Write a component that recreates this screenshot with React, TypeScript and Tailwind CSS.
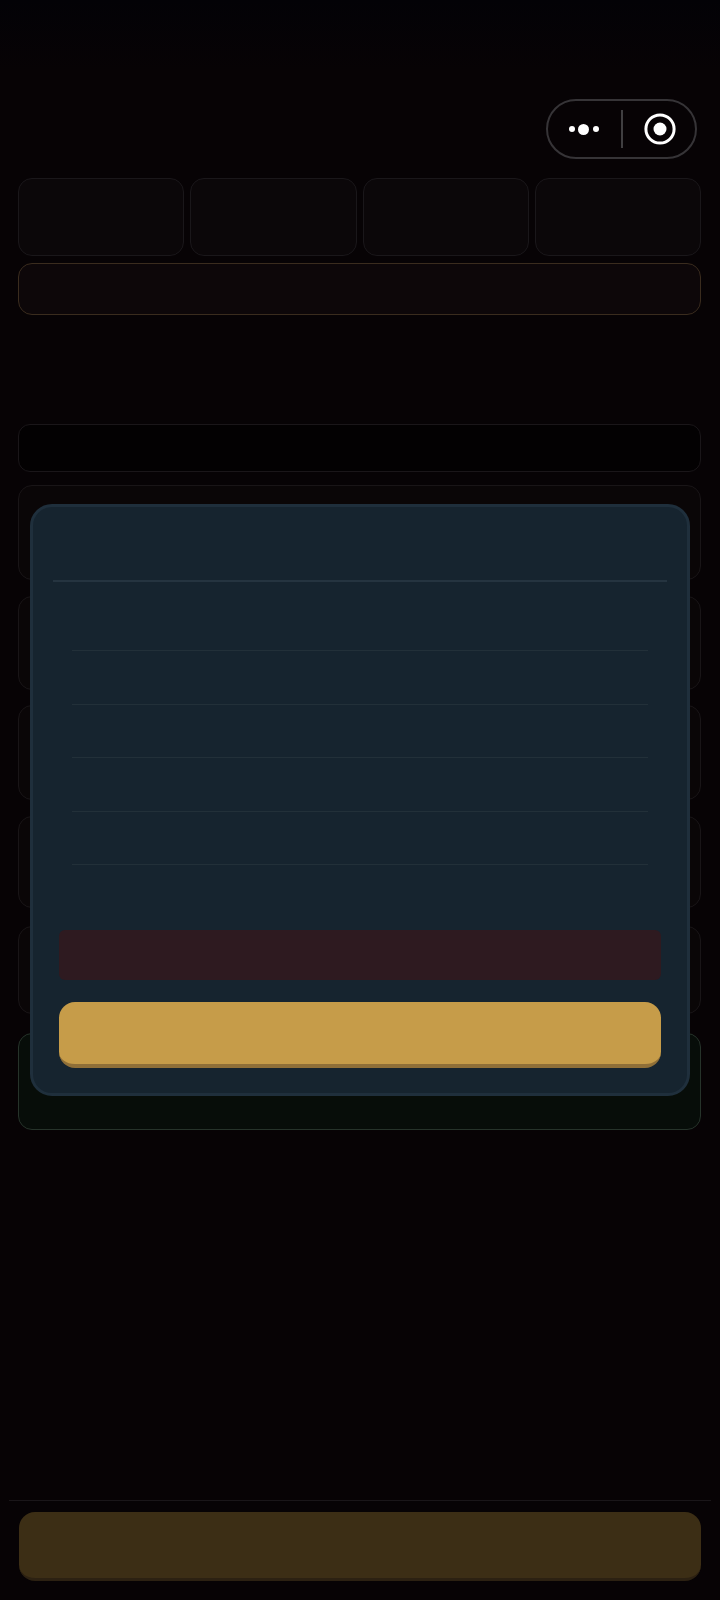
const STATS = ["a", "b", "c", "d"]
const LIST_CARDS = [
  "h-[95px]",
  "mt-[16px] h-[94px]",
  "mt-[15px] h-[95px]",
  "mt-[16px] h-[92px]",
  "mt-[18px] h-[88px]",
]
const RULES = ["a", "b", "c", "d", "e"]

function MenuPill() {
  return (
    <div className="flex h-[60px] w-[151px] items-center rounded-full border-2 border-[#363437] bg-[#070305]">
      <div className="flex w-[71px] items-center justify-center gap-[3.5px]">
        <span className="h-[6px] w-[6px] rounded-full bg-white" />
        <span className="h-[11px] w-[11px] rounded-full bg-white" />
        <span className="h-[6px] w-[6px] rounded-full bg-white" />
      </div>
      <div className="ml-[2px] h-[38px] w-[2px] bg-[#403f41]" />
      <div className="flex flex-1 items-center justify-center pl-[2px]">
        <svg width="32" height="32" viewBox="0 0 32 32" fill="none">
          <circle cx="16" cy="16" r="14.1" stroke="white" strokeWidth="3" />
          <circle cx="16" cy="16" r="6.5" fill="white" />
        </svg>
      </div>
    </div>
  )
}

export default function App() {
  return (
    <div className="relative flex h-[1600px] w-[720px] flex-col overflow-hidden bg-[linear-gradient(#030206,#070305_70px,#070305)]">
      {/* Top bar */}
      <div className="flex justify-end pt-[99px] pr-[23px]">
        <MenuPill />
      </div>

      <div className="flex flex-col pt-[19px] pr-[19px] pl-[18px]">
        <div className="grid grid-cols-4 gap-[6px]">
          {STATS.map((s) => (
            <div key={s} className="h-[78px] rounded-[14px] border border-[#1a171a] bg-[#0b0709]" />
          ))}
        </div>

        <div className="mt-[7px] h-[52px] rounded-[14px] border border-[#3a2c1e] bg-[#0d0709]" />

        <div className="mt-[109px] h-[48px] rounded-[12px] border border-[#1a1619] bg-[#030102]" />

        <div className="mt-[13px] flex flex-col">
          {LIST_CARDS.map((c, i) => (
            <div key={i} className={`${c} rounded-[14px] border border-[#191517] bg-[#0a0607]`} />
          ))}
        </div>

        <div className="mt-[19px] h-[97px] rounded-[14px] border border-[#26332a] bg-[#070d09]" />
      </div>

      {/* Bottom action */}
      <div className="mx-[9px] mt-auto mb-[19px] flex flex-col border-t border-[#1a1619] px-[10px] pt-[11px]">
        <div className="h-[69px] rounded-[16px] border-b-[3px] border-[#2c2112] bg-[#3c2e15]" />
      </div>

      {/* Modal */}
      <div className="absolute top-[504px] left-[30px] flex h-[592px] w-[660px] flex-col rounded-[22px] border-[3px] border-[#1f2f3c] bg-[#16242f]">
        <div className="mx-[20px] mt-[73px] h-[2px] bg-[#253440]" />
        <div className="mx-[39px] mt-[68px] flex flex-col gap-[52.5px]">
          {RULES.map((r) => (
            <div key={r} className="h-[1px] bg-[#223039]" />
          ))}
        </div>
        <div className="mx-[26px] mt-[65px] h-[50px] rounded-[6px] bg-[#2e1a20]" />
        <div className="mx-[26px] mt-[22px] h-[66px] rounded-[16px] border-b-[4px] border-[#8f6f38] bg-[#c69c49]" />
      </div>
    </div>
  )
}
